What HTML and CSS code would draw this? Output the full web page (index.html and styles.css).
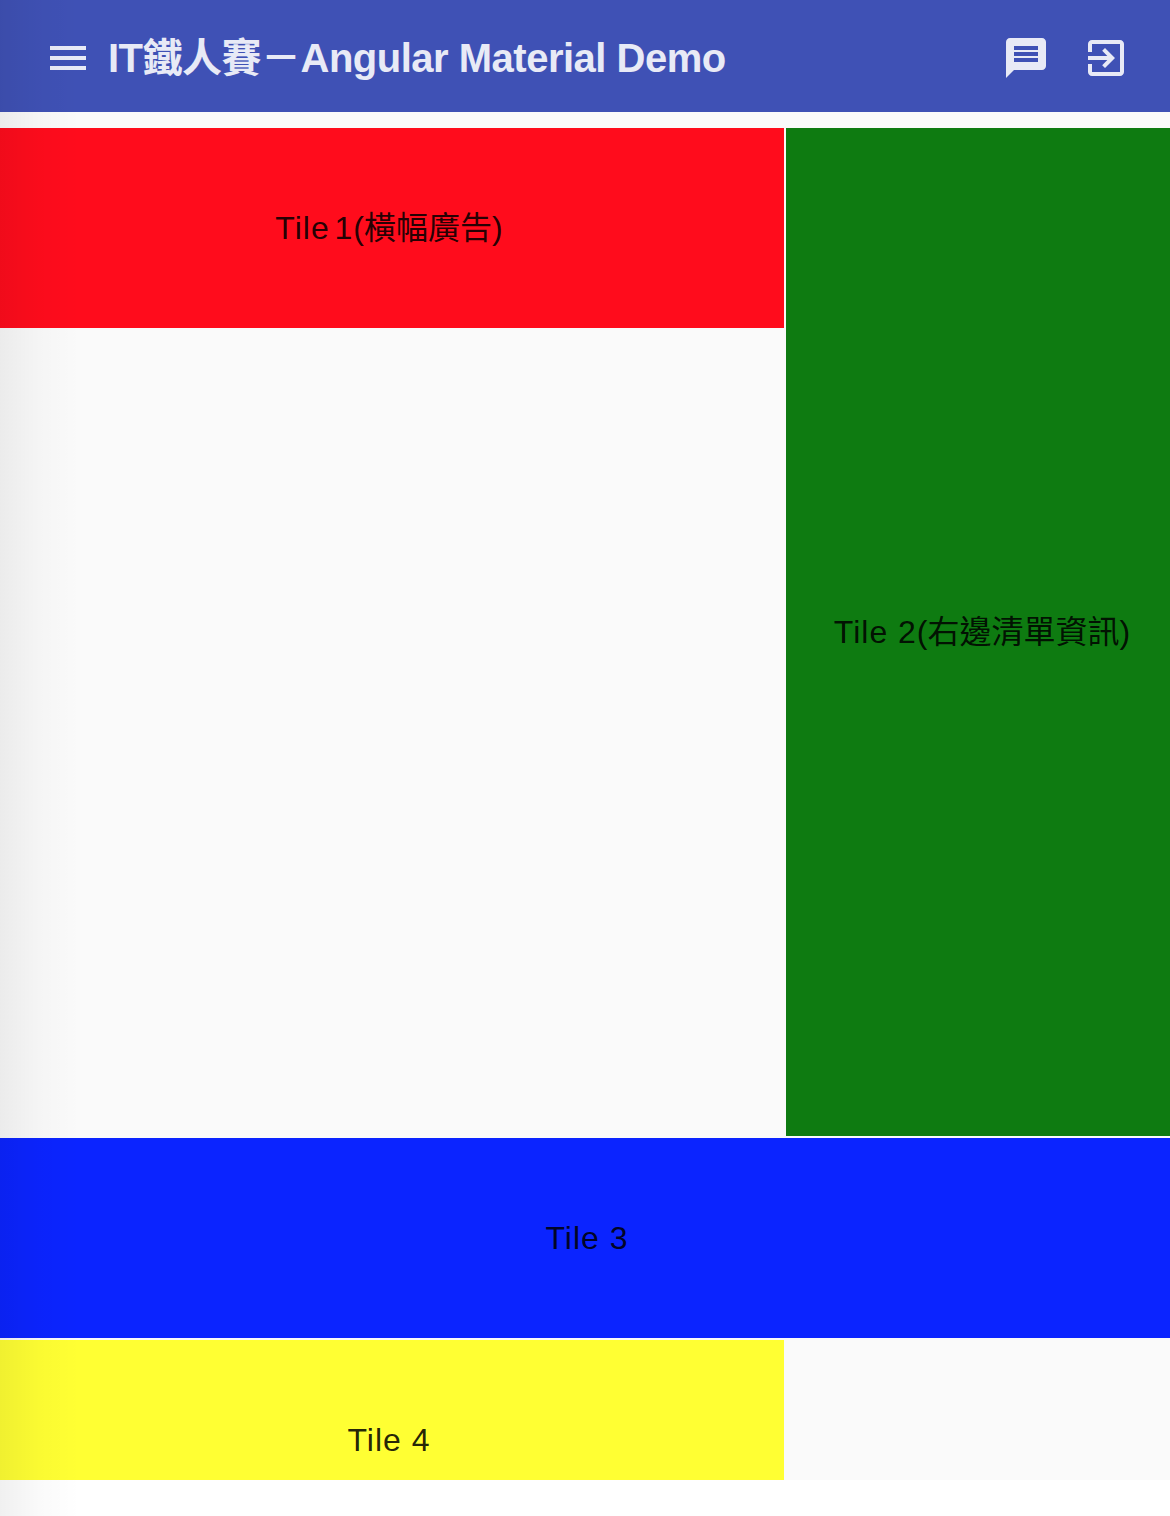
FILE: index.html
```html
<!DOCTYPE html>
<html>
<head>
    <title>IT鐵人賽－Angular Material Demo</title>
    <link rel="stylesheet" href="styles.css">
</head>
<body>
    <header class="toolbar">
        <button class="icon-btn menu-btn" type="button" aria-label="menu">
            <svg viewBox="0 0 24 24"><path d="M3 18h18v-2H3v2zm0-5h18v-2H3v2zm0-7v2h18V6H3z"/></svg>
        </button>
        <span class="toolbar-title">IT鐵人賽－Angular Material Demo</span>
        <span class="spacer"></span>
        <button class="icon-btn" type="button" aria-label="message">
            <svg viewBox="0 0 24 24"><path d="M20 2H4c-1.1 0-1.99.9-1.99 2L2 22l4-4h14c1.1 0 2-.9 2-2V4c0-1.1-.9-2-2-2zm-2 12H6v-2h12v2zm0-3H6V9h12v2zm0-3H6V6h12v2z"/></svg>
        </button>
        <button class="icon-btn" type="button" aria-label="exit">
            <svg viewBox="0 0 24 24"><path d="M10.09 15.59L11.5 17l5-5-5-5-1.41 1.41L12.67 11H3v2h9.67l-2.58 2.59zM19 3H5c-1.11 0-2 .9-2 2v4h2V5h14v14H5v-4H3v4c0 1.1.89 2 2 2h14c1.1 0 2-.9 2-2V5c0-1.1-.9-2-2-2z"/></svg>
        </button>
    </header>
    <main class="content">
        <div class="grid-list">
            <div class="tile tile-red"><div><span class="tile-name tile-name-one">Tile 1</span>(橫幅廣告)</div></div>
            <div class="tile tile-green"><div><span class="tile-name">Tile 2</span>(右邊清單資訊)</div></div>
            <div class="tile tile-blue"><div><span class="tile-name">Tile 3</span></div></div>
            <div class="tile tile-yellow"><div><span class="tile-name">Tile 4</span></div></div>
        </div>
    </main>
    <div class="drawer-shadow"></div>
</body>
</html>
```

FILE: styles.css
```css
html, body {
    margin: 0;
    padding: 0;
    background-color: #fff;
}
body {
    position: relative;
    height: 1516px;
    overflow: hidden;
    font-family: "Liberation Sans", "Noto Sans CJK TC", sans-serif;
}
.toolbar {
    display: flex;
    align-items: center;
    height: 112px;
    padding: 4px 40px 0 44px;
    box-sizing: border-box;
    gap: 32px;
    background-color: #3f51b5;
    color: #e8eaf6;
}
.toolbar-title {
    margin-left: -16px;
    font-size: 40px;
    line-height: 48px;
    font-weight: 700;
    letter-spacing: -.5px;
    white-space: nowrap;
}
.spacer {
    flex: 1;
}
.icon-btn {
    width: 48px;
    height: 48px;
    padding: 0;
    border: none;
    background: none;
    color: inherit;
}
.icon-btn svg {
    display: block;
    width: 48px;
    height: 48px;
    fill: currentColor;
}
.content {
    height: 1368px;
    padding-top: 16px;
    box-sizing: border-box;
    background-color: #fafafa;
    overflow: hidden;
}
.grid-list {
    display: grid;
    grid-template-columns: 784px 384px;
    grid-auto-rows: 200px;
    gap: 2px;
}
.tile {
    display: flex;
    align-items: center;
    justify-content: center;
    font-size: 32px;
    line-height: 40px;
    color: rgba(0, 0, 0, .87);
}
.tile-name {
    letter-spacing: 1px;
}
.tile-name-one {
    word-spacing: -5px;
}
.tile-red {
    background-color: #ff0c1c;
    padding-right: 6px;
}
.tile-green {
    grid-column: 2;
    grid-row: 1 / span 5;
    background-color: #0e7b11;
    padding-left: 8px;
}
.tile-blue {
    grid-column: 1 / span 2;
    background-color: #0b24ff;
    padding-left: 4px;
}
.tile-yellow {
    background-color: #ffff33;
    padding-right: 6px;
}
.drawer-shadow {
    position: absolute;
    top: 0;
    bottom: 0;
    left: 0;
    width: 80px;
    background: linear-gradient(to right, rgba(0, 0, 0, .06), rgba(0, 0, 0, .02) 50%, rgba(0, 0, 0, 0));
}
```
